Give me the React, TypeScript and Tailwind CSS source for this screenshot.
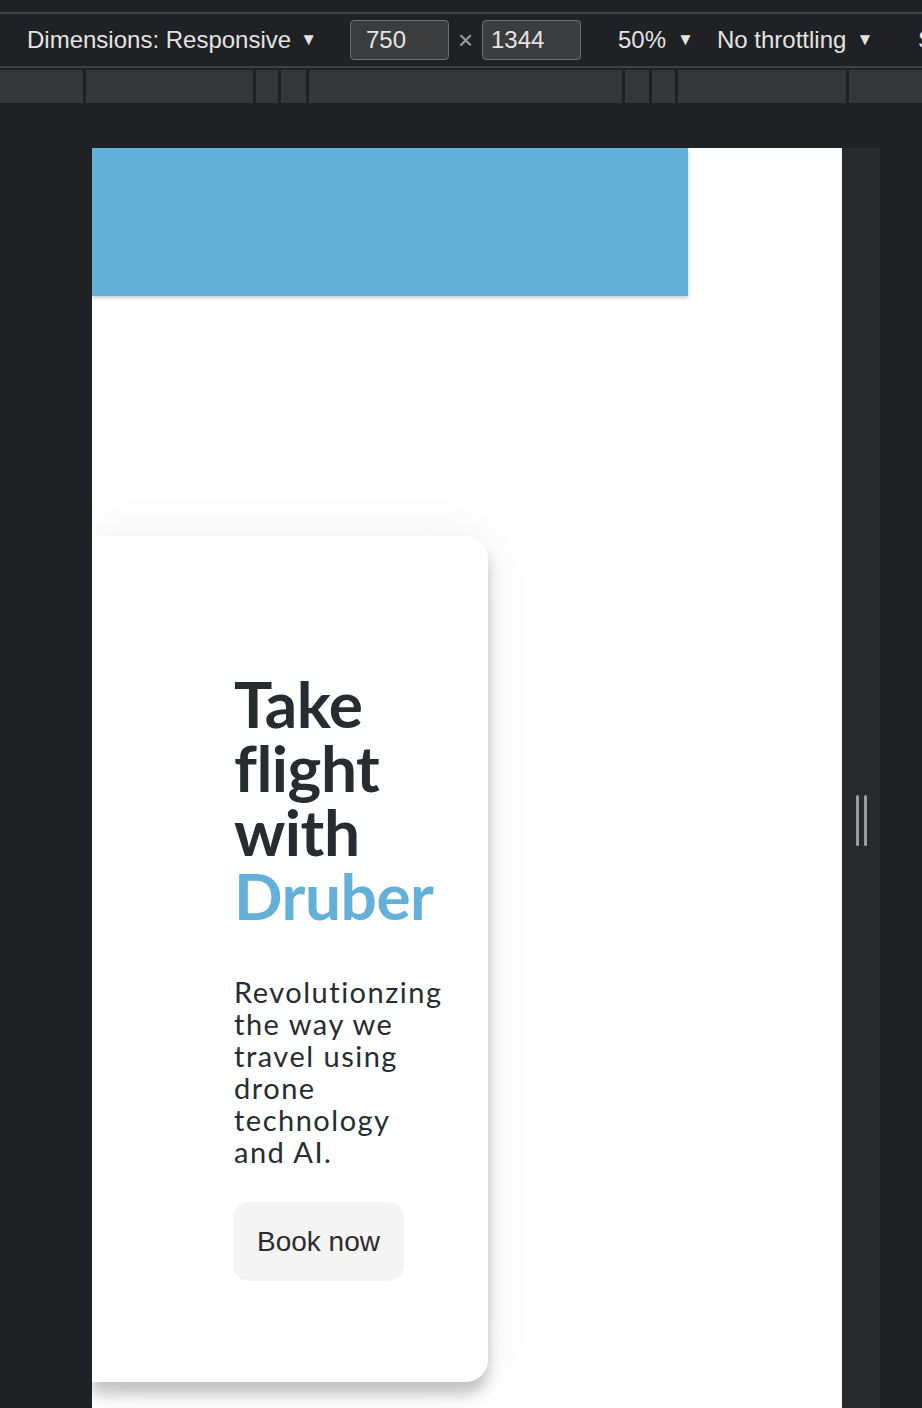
import React from "react";

export default function App() {
  const seps = [83, 253, 278, 306, 622, 649, 675, 846];
  return (
    <div className="w-[922px] h-[1408px] overflow-hidden bg-[#202124] flex flex-col" style={{ fontFamily: '"Liberation Sans", Arial, sans-serif' }}>
      {/* top devtools toolbar */}
      <div className="h-[12px] bg-[#202124]" />
      <div className="h-[2px] bg-[#3f4042]" />
      <div className="h-[52px] bg-[#202124] flex items-center text-[24px] text-[#e3e3e3] whitespace-nowrap">
        <div className="w-[350px] shrink-0 pl-[27px] flex items-center">
          <span>Dimensions: Responsive</span>
          <span className="ml-[9px] text-[17px]">▼</span>
        </div>
        <div className="w-[99px] h-[40px] shrink-0 rounded-[4px] border border-[#6f7072] bg-[#3b3c3e] flex items-center pl-[15px]">750</div>
        <div className="w-[33px] shrink-0 flex justify-center text-[26px] text-[#9aa0a6]">×</div>
        <div className="w-[99px] h-[40px] shrink-0 rounded-[4px] border border-[#6f7072] bg-[#3b3c3e] flex items-center pl-[8px]">1344</div>
        <div className="w-[136px] shrink-0 pl-[37px] flex items-center">
          <span>50%</span>
          <span className="ml-[11px] text-[17px]">▼</span>
        </div>
        <div className="w-[201px] shrink-0 flex items-center">
          <span>No throttling</span>
          <span className="ml-[10px] text-[17px]">▼</span>
        </div>
        <span>S</span>
      </div>
      <div className="h-[2px] bg-[#3f4042]" />
      <div className="h-[2px] bg-[#202124]" />
      <div className="h-[33px] bg-[#35363a] relative">
        {seps.map((x) => (
          <div key={x} className="absolute top-0 h-full w-[3px] bg-[#202124]" style={{ left: x }} />
        ))}
      </div>
      <div className="h-[45px] bg-[#202124]" />
      {/* viewport area */}
      <div className="flex flex-1 min-h-0">
        <div className="w-[92px] shrink-0 bg-[#202124]" />
        <div className="w-[750px] shrink-0 bg-white overflow-hidden flex flex-col">
          <div className="w-[596px] h-[148px] shrink-0 bg-[#63b0da] shadow-[0_2px_4px_rgba(0,0,0,0.22)]" />
          <div className="h-[240px] shrink-0" />
          <div className="w-[396px] shrink-0 bg-white rounded-r-[22px] shadow-[0_12px_14px_rgba(0,0,0,0.22),0_0_50px_rgba(0,0,0,0.07)] pl-[142px] pr-[40px] pt-[136px] pb-[101px]">
            <h1 className="text-[64px] leading-[64px] font-bold text-[#272c30] tracking-[-0.5px]" style={{ fontFamily: 'Lato, "Open Sans", sans-serif' }}>
              Take flight with <span className="text-[#63b0da]">Druber</span>
            </h1>
            <p className="mt-[48px] w-[212px] text-[29px] leading-[32px] text-[#272c30] tracking-[1.5px]" style={{ fontFamily: 'Lato, "Open Sans", sans-serif' }}>
              Revolutionzing the way we travel using drone technology and AI.
            </p>
            <button className="mt-[34px] -ml-[1px] w-[171px] h-[79px] rounded-[16px] bg-[#f4f4f4] text-[28px] text-[#2b2b2b] flex items-center justify-center">
              Book now
            </button>
          </div>
        </div>
        <div className="w-[38px] shrink-0 bg-[#292a2d] flex justify-center">
          <div className="mt-[647px] flex gap-[5px] h-[51px]">
            <div className="w-[3px] h-full rounded-full bg-[#9d9d9d]" />
            <div className="w-[3px] h-full rounded-full bg-[#9d9d9d]" />
          </div>
        </div>
        <div className="flex-1 bg-[#202124]" />
      </div>
    </div>
  );
}
